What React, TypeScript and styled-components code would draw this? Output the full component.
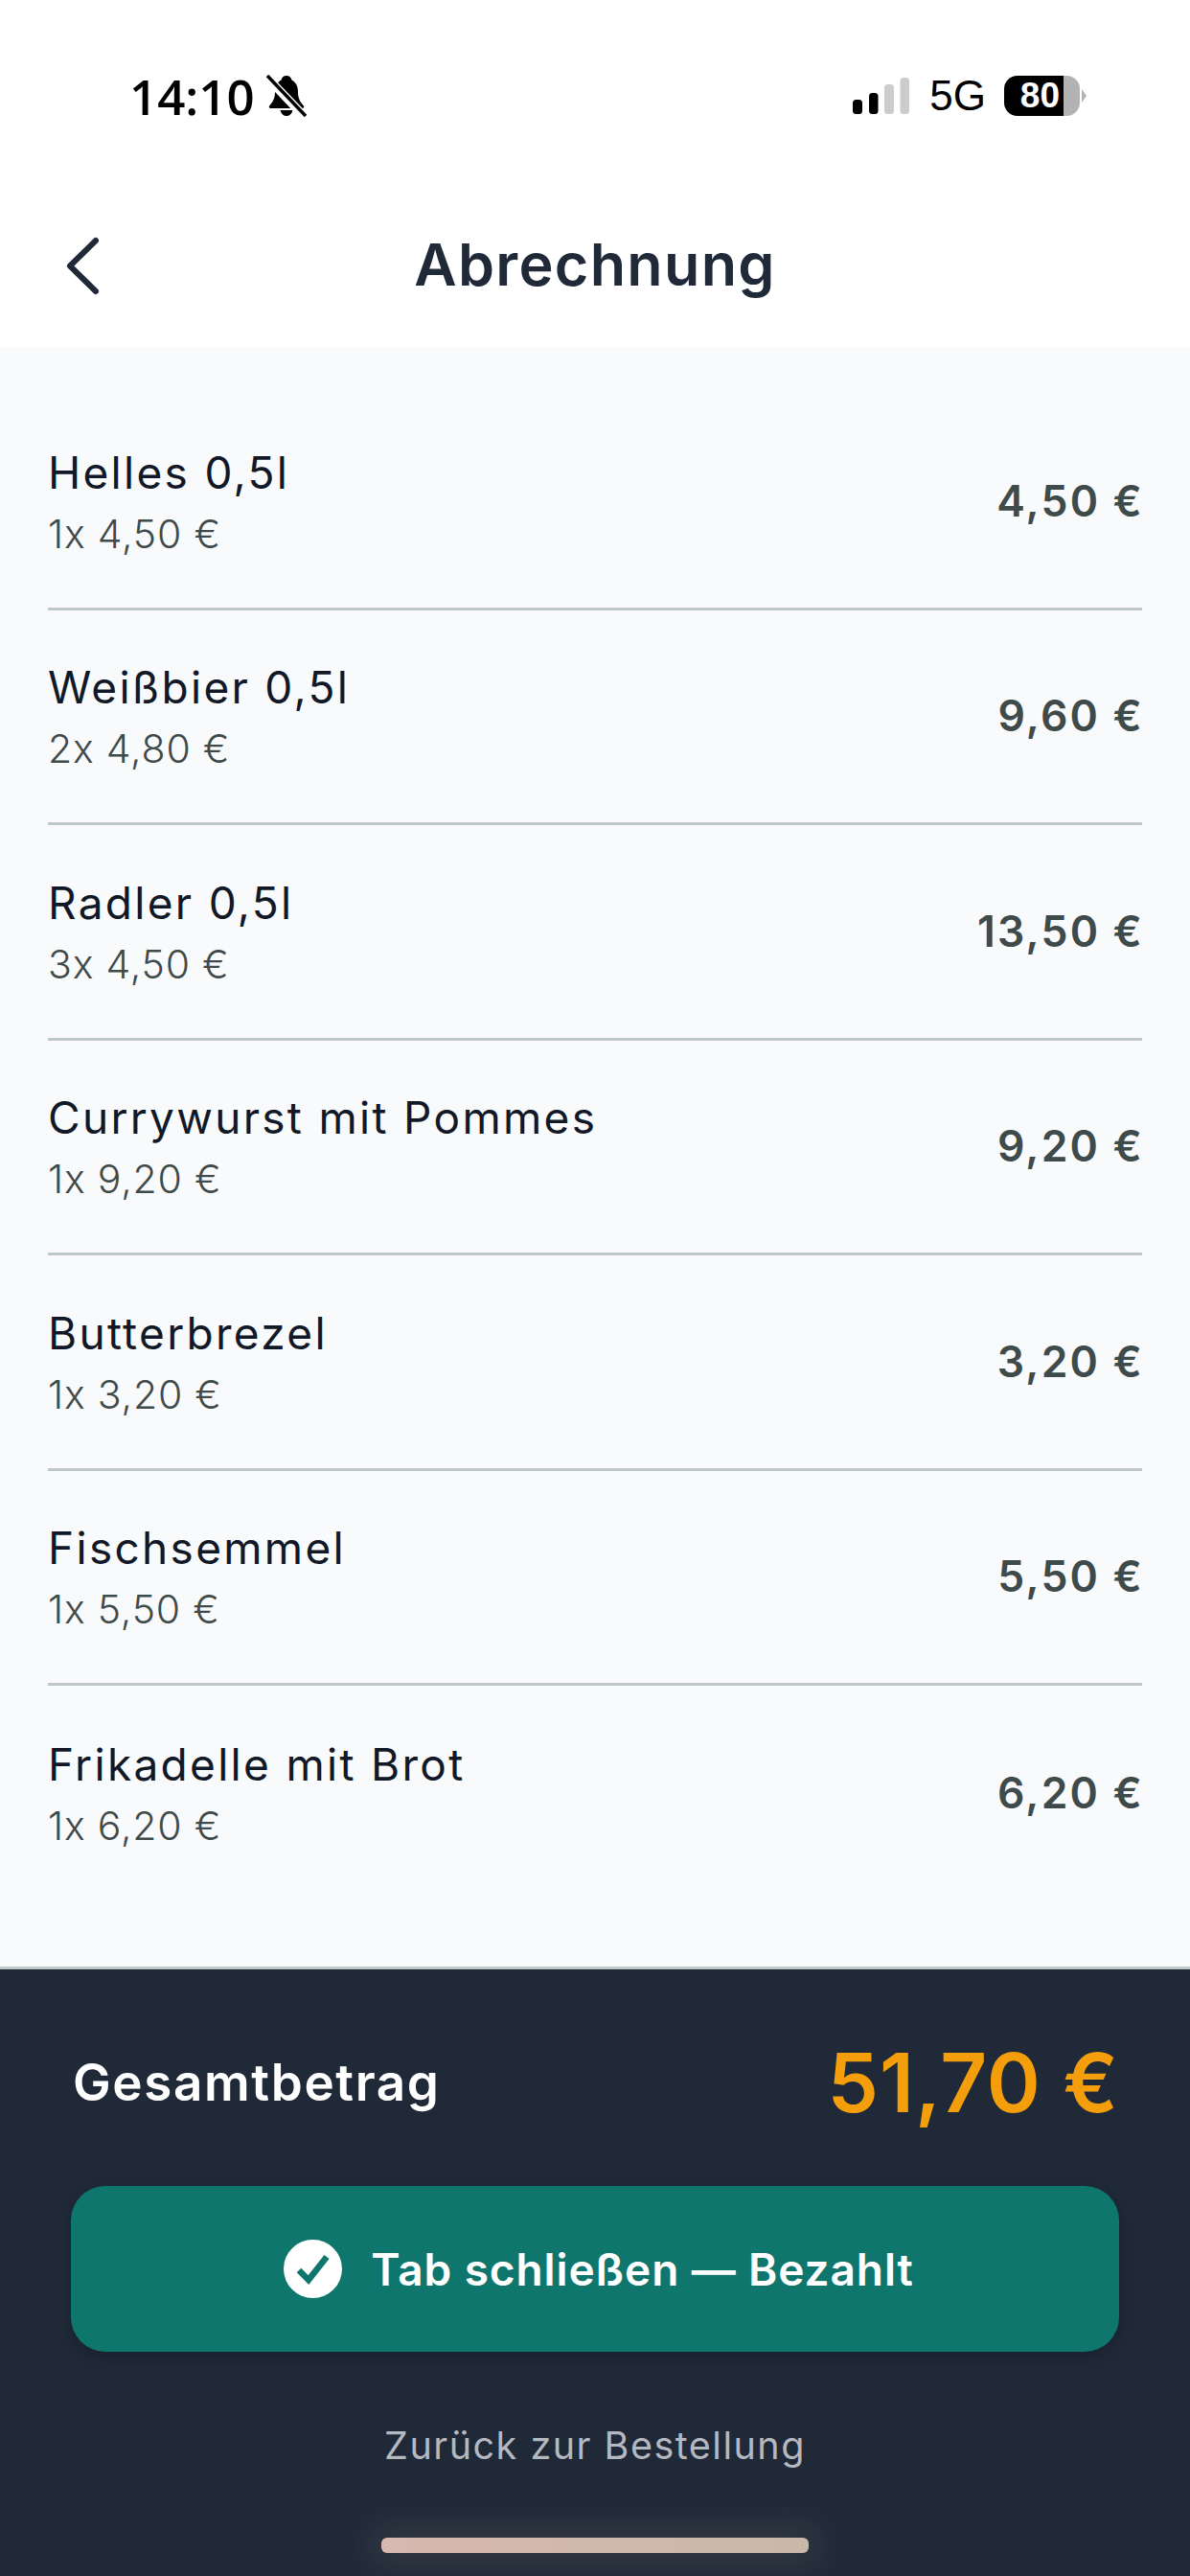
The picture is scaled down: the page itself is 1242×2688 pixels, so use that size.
import React from "react";
import styled, { createGlobalStyle } from "styled-components";

const Global = createGlobalStyle`
  html, body { margin: 0; padding: 0; background: #fff; }
  * { box-sizing: border-box; }
  body { font-family: Inter, "Noto Sans", sans-serif; -webkit-font-smoothing: antialiased; }
`;

const Page = styled.div`
  width: 1242px;
  height: 2688px;
  display: flex;
  flex-direction: column;
  overflow: hidden;
  background: #f9fafb;
`;

const TopArea = styled.header`
  height: 362px;
  flex: none;
  background: #fff;
  display: flex;
  flex-direction: column;
`;

const StatusBar = styled.div`
  height: 180px;
  padding: 72px 108px 0 135px;
  display: flex;
  justify-content: space-between;
  align-items: flex-start;
`;

const StatusLeft = styled.div`
  display: flex;
  align-items: center;
  gap: 12px;
  height: 56px;
`;

const Clock = styled.span`
  font-family: "Open Sans", Inter, sans-serif;
  font-size: 51px;
  font-weight: 600;
  color: #000;
  line-height: 56px;
`;

const StatusRight = styled.div`
  display: flex;
  align-items: center;
  height: 56px;
`;

const NetLabel = styled.span`
  font-family: "Liberation Sans", Arial, sans-serif;
  font-size: 44px;
  color: #000;
  margin: 0 19px 0 21px;
  line-height: 56px;
`;

const Battery = styled.div`
  width: 79px;
  height: 42px;
  border-radius: 14px;
  overflow: hidden;
  display: flex;
  position: relative;
`;

const BatteryLevel = styled.div`
  width: 62px;
  background: #000;
  color: #fff;
  font-family: "Liberation Sans", Arial, sans-serif;
  font-weight: 700;
  font-size: 37px;
  line-height: 42px;
  text-align: right;
  padding-right: 4px;
`;

const BatteryRest = styled.div`
  flex: 1;
  background: #b3b3b3;
`;

const BatteryTip = styled.div`
  width: 0;
  height: 0;
  margin-left: 2px;
  border-top: 7px solid transparent;
  border-bottom: 7px solid transparent;
  border-left: 5px solid #b3b3b3;
`;

const NavBar = styled.div`
  flex: 1;
  position: relative;
  display: flex;
  align-items: center;
  justify-content: center;
  padding-top: 10px;
`;

const BackButton = styled.button`
  position: absolute;
  left: 60px;
  top: 64px;
  width: 50px;
  height: 70px;
  padding: 0;
  border: 0;
  background: none;
  display: flex;
`;

const Title = styled.h1`
  margin: 0;
  font-size: 61px;
  font-weight: 600;
  line-height: 72px;
  color: #1f2937;
  letter-spacing: 1.300px;
`;

const List = styled.main`
  flex: 1;
  padding: 50px 50px 0;
  display: flex;
  flex-direction: column;
`;

const Row = styled.div`
  height: 224.500px;
  flex: none;
  border-bottom: 3px solid #bfc8c8;
  display: flex;
  justify-content: space-between;
  align-items: center;
  padding-bottom: 0;
  &:last-child { border-bottom: 0; }
`;

const ItemText = styled.div`
  display: flex;
  flex-direction: column;
  gap: 14px;
`;

const ItemName = styled.div`
  font-size: 46px;
  font-weight: 400;
  line-height: 54px;
  letter-spacing: 2.300px;
  color: #111827;
`;

const ItemQty = styled.div`
  font-size: 41px;
  font-weight: 300;
  line-height: 46px;
  letter-spacing: 0.800px;
  color: #3f4a4a;
`;

const ItemPrice = styled.div`
  font-size: 44.500px;
  font-weight: 600;
  letter-spacing: 2.200px;
  margin-right: -2px;
  color: #3f4a4a;
`;

const Footer = styled.footer`
  height: 636px;
  flex: none;
  background: #1f2937;
  border-top: 3px solid #bfc8c8;
  padding: 65px 74px 0;
  position: relative;
  display: flex;
  flex-direction: column;
`;

const TotalRow = styled.div`
  height: 106px;
  display: flex;
  justify-content: space-between;
  align-items: center;
  padding: 0 0 0 2px;
`;

const TotalLabel = styled.span`
  font-size: 53px;
  font-weight: 600;
  letter-spacing: 1.600px;
  color: #fff;
`;

const TotalValue = styled.span`
  font-size: 85px;
  font-weight: 600;
  letter-spacing: 1px;
  color: #f59e0b;
`;

const PayButton = styled.button`
  margin-top: 55px;
  height: 173px;
  flex: none;
  border: 0;
  padding: 0 0 0 8px;
  border-radius: 36px;
  background: #0f766e;
  box-shadow: 0 6px 14px rgba(0, 0, 0, 0.18);
  display: flex;
  align-items: center;
  justify-content: center;
  gap: 30px;
  color: #fff;
  font-family: inherit;
  font-size: 46px;
  font-weight: 600;
  letter-spacing: 0.900px;
`;

const BackLink = styled.div`
  margin-top: 74px;
  text-align: center;
  font-size: 39.500px;
  font-weight: 400;
  line-height: 48px;
  letter-spacing: 1.500px;
  color: #b4b8c0;
`;

const HomeBar = styled.div`
  position: absolute;
  left: 398px;
  bottom: 24px;
  width: 446px;
  height: 16px;
  border-radius: 6px;
  background: linear-gradient(90deg, #d8b8b0, #c8b8a8);
  box-shadow: 0 0 36px 14px rgba(208, 184, 174, 0.12);
`;

const items = [
  ["Helles 0,5l", "1x 4,50 €", "4,50 €"],
  ["Weißbier 0,5l", "2x 4,80 €", "9,60 €"],
  ["Radler 0,5l", "3x 4,50 €", "13,50 €"],
  ["Currywurst mit Pommes", "1x 9,20 €", "9,20 €"],
  ["Butterbrezel", "1x 3,20 €", "3,20 €"],
  ["Fischsemmel", "1x 5,50 €", "5,50 €"],
  ["Frikadelle mit Brot", "1x 6,20 €", "6,20 €"],
];

const Signal = () => (
  <svg width="59" height="38" viewBox="0 0 59 38">
    <rect x="0" y="23" width="10" height="15" rx="3.500" fill="#000" />
    <rect x="17" y="16" width="9.500" height="22" rx="3.500" fill="#000" />
    <rect x="33" y="7" width="10" height="31" rx="3.500" fill="#ccc" />
    <rect x="49.500" y="0" width="9.500" height="38" rx="3.500" fill="#ccc" />
  </svg>
);

const MutedBell = () => (
  <svg width="42" height="44" viewBox="0 0 42 44">
    <path d="M21 1c3 0 5 2 5.500 4.500C31 8 33 12 33 18c0 6 2 10 5.500 14 1.500 2 .5 3-1.500 3H5c-2 0-3-1-1.500-3C7 28 9 24 9 18 9 12 11 8 15.500 5.500 16 3 18 1 21 1z" fill="#000" />
    <path d="M14.500 37h13c-1 4-3.500 6-6.500 6s-5.500-2-6.500-6z" fill="#000" />
    <path d="M0 2L40 44" stroke="#fff" strokeWidth="9" />
    <path d="M1 1L41 43" stroke="#000" strokeWidth="3.500" />
  </svg>
);

const Chevron = () => (
  <svg width="50" height="70" viewBox="0 0 50 70">
    <path d="M40 7L13 33.500 40 60" fill="none" stroke="#1f2937" strokeWidth="6" strokeLinecap="round" strokeLinejoin="round" />
  </svg>
);

const CheckCircle = () => (
  <svg width="61" height="61" viewBox="0 0 61 61">
    <circle cx="30.500" cy="30.500" r="30.500" fill="#fff" />
    <path d="M16 32l10 10 19-24" fill="none" stroke="#0f766e" strokeWidth="6.500" />
  </svg>
);

export default function App() {
  return (
    <Page>
      <Global />
      <TopArea>
        <StatusBar>
          <StatusLeft>
            <Clock>14:10</Clock>
            <MutedBell />
          </StatusLeft>
          <StatusRight>
            <Signal />
            <NetLabel>5G</NetLabel>
            <Battery>
              <BatteryLevel>80</BatteryLevel>
              <BatteryRest />
            </Battery>
            <BatteryTip />
          </StatusRight>
        </StatusBar>
        <NavBar>
          <BackButton aria-label="Zurück"><Chevron /></BackButton>
          <Title>Abrechnung</Title>
        </NavBar>
      </TopArea>
      <List>
        {items.map(([name, qty, price]) => (
          <Row key={name}>
            <ItemText>
              <ItemName>{name}</ItemName>
              <ItemQty>{qty}</ItemQty>
            </ItemText>
            <ItemPrice>{price}</ItemPrice>
          </Row>
        ))}
      </List>
      <Footer>
        <TotalRow>
          <TotalLabel>Gesamtbetrag</TotalLabel>
          <TotalValue>51,70 €</TotalValue>
        </TotalRow>
        <PayButton><CheckCircle />Tab schließen — Bezahlt</PayButton>
        <BackLink>Zurück zur Bestellung</BackLink>
        <HomeBar />
      </Footer>
    </Page>
  );
}
